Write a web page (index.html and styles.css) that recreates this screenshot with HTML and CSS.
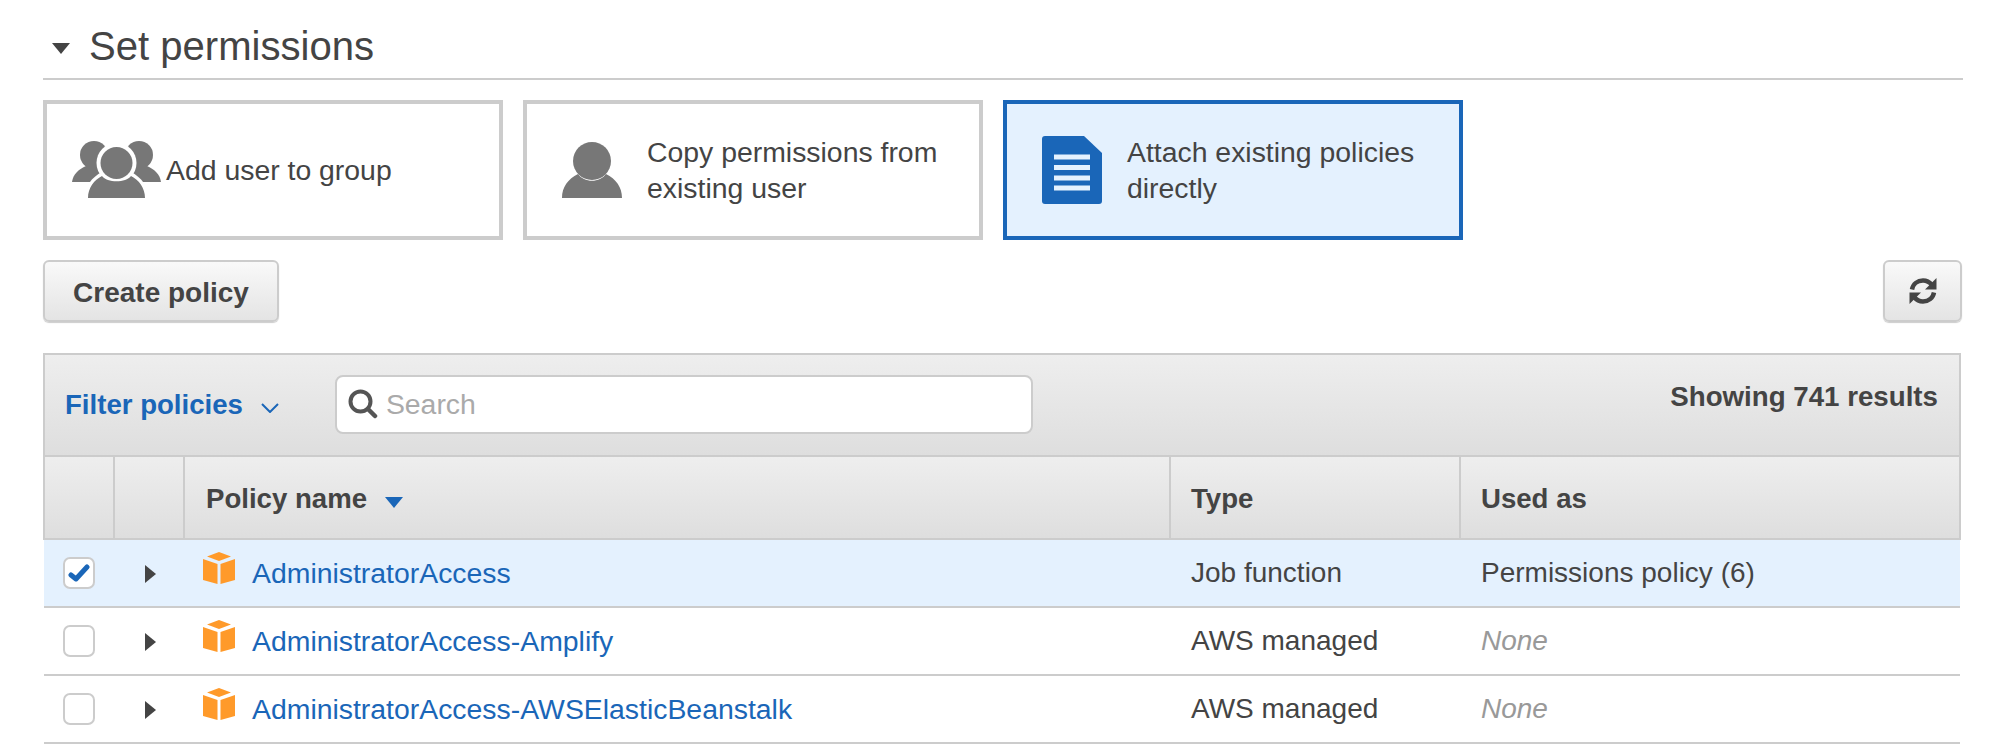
FILE: index.html
```html
<!DOCTYPE html>
<html lang="en">
<head>
  <meta charset="UTF-8" />
  <title>Set permissions</title>
  <link rel="stylesheet" href="styles.css">
</head>
<body>
  <div class="container">
    <h2 class="section-title">
      <svg class="title-caret" width="18" height="11" viewBox="0 0 18 11"><path d="M0 0H18L9 11Z" fill="#444"/></svg>
      Set permissions
    </h2>

    <div class="cards">
      <div class="card card-group">
        <svg class="card-icon" width="90" height="58" viewBox="0 0 90 58">
          <g fill="#777">
            <circle cx="22" cy="14" r="14"/>
            <circle cx="67" cy="14" r="14"/>
            <path d="M0 41C1 33 7 28 14 25H31V41Z"/>
            <path d="M89 41C88 33 82 28 75 25H58V41Z"/>
          </g>
          <circle cx="44.500" cy="22" r="20" fill="#fff"/>
          <path d="M12 58C12 46 20 36 30 31H59C69 36 77 46 77 58Z" fill="#fff"/>
          <circle cx="44.500" cy="22" r="16" fill="#777"/>
          <path d="M16 57C16 47 22 39 30 35C35 42 54 42 59 35C67 39 73 47 73 57Z" fill="#777"/>
        </svg>
        <span>Add user to group</span>
      </div>
      <div class="card card-copy">
        <svg class="card-icon" width="60" height="56" viewBox="0 0 60 56">
          <circle cx="30" cy="19" r="19" fill="#777"/>
          <path d="M0 56C0 45 6 37 16 32C22 41 38 41 44 32C54 37 60 45 60 56Z" fill="#777"/>
        </svg>
        <span>Copy permissions from<br>existing user</span>
      </div>
      <div class="card card-active">
        <svg class="card-icon" width="60" height="68" viewBox="0 0 60 68">
          <path d="M3 0H42L60 17V65A3 3 0 0 1 57 68H3A3 3 0 0 1 0 65V3A3 3 0 0 1 3 0Z" fill="#1a66b8"/>
          <path d="M12 21H48M12 31.500H48M12 42H48M12 52H48" stroke="#e4f1fe" stroke-width="5"/>
        </svg>
        <span>Attach existing policies<br>directly</span>
      </div>
    </div>

    <div class="actions">
      <button class="btn btn-create">Create policy</button>
      <button class="btn btn-refresh">
        <svg width="28" height="26" viewBox="0 0 28 26" fill="none">
          <path d="M3 11.500C4 6 8.500 2.500 14 2.500C18 2.500 20.500 4 23 7" stroke="#444" stroke-width="4.500"/>
          <path d="M27.500 0V11.500H16Z" fill="#444"/>
          <path d="M25 14.500C24 20 19.500 23.500 14 23.500C10 23.500 7.500 22 5 19" stroke="#444" stroke-width="4.500"/>
          <path d="M0.500 26V14.500H12Z" fill="#444"/>
        </svg>
      </button>
    </div>

    <div class="toolbar">
      <a class="filter">Filter policies</a>
      <svg class="filter-chevron" width="18" height="10" viewBox="0 0 18 10" fill="none"><path d="M1 1L9 9L17 1" stroke="#1a66b8" stroke-width="2"/></svg>
      <div class="search">
        <svg width="30" height="30" viewBox="0 0 30 30" fill="none">
          <circle cx="12.500" cy="12.500" r="10" stroke="#555" stroke-width="4"/>
          <path d="M20 20L27 27" stroke="#555" stroke-width="4.500" stroke-linecap="round"/>
        </svg>
        <span class="placeholder">Search</span>
      </div>
      <div class="results">Showing 741 results</div>
    </div>

    <table class="policies">
      <thead>
        <tr>
          <th class="col-check"></th>
          <th class="col-expand"></th>
          <th class="col-name">Policy name
            <svg class="sort-caret" width="18" height="11" viewBox="0 0 18 11"><path d="M0 0H18L9 11Z" fill="#1a66b8"/></svg>
          </th>
          <th class="col-type">Type</th>
          <th class="col-used">Used as</th>
        </tr>
      </thead>
      <tbody>
        <tr class="selected">
          <td class="check-cell"><span class="checkbox">
            <svg width="22" height="18" viewBox="0 0 22 18" fill="none"><path d="M3 11L8 15L19 3" stroke="#1a66b8" stroke-width="5" stroke-linecap="round" stroke-linejoin="round"/></svg>
          </span></td>
          <td><span class="expand"></span></td>
          <td class="name-cell">
            <div class="name-wrap">
              <svg class="cube" width="32" height="32" viewBox="0 0 32 32"><path d="M16 0L28 4.500L16 9L4 4.500Z" fill="#ff9a2a"/><path d="M0 7L14.500 12V32L0 28Z" fill="#ff9a2a"/><path d="M32 7L17.500 12V32L32 28Z" fill="#ff9a2a"/></svg>
              <a>AdministratorAccess</a>
            </div>
          </td>
          <td>Job function</td>
          <td>Permissions policy (6)</td>
        </tr>
        <tr>
          <td class="check-cell"><span class="checkbox"></span></td>
          <td><span class="expand"></span></td>
          <td class="name-cell">
            <div class="name-wrap">
              <svg class="cube" width="32" height="32" viewBox="0 0 32 32"><path d="M16 0L28 4.500L16 9L4 4.500Z" fill="#ff9a2a"/><path d="M0 7L14.500 12V32L0 28Z" fill="#ff9a2a"/><path d="M32 7L17.500 12V32L32 28Z" fill="#ff9a2a"/></svg>
              <a>AdministratorAccess-Amplify</a>
            </div>
          </td>
          <td>AWS managed</td>
          <td class="none">None</td>
        </tr>
        <tr>
          <td class="check-cell"><span class="checkbox"></span></td>
          <td><span class="expand"></span></td>
          <td class="name-cell">
            <div class="name-wrap">
              <svg class="cube" width="32" height="32" viewBox="0 0 32 32"><path d="M16 0L28 4.500L16 9L4 4.500Z" fill="#ff9a2a"/><path d="M0 7L14.500 12V32L0 28Z" fill="#ff9a2a"/><path d="M32 7L17.500 12V32L32 28Z" fill="#ff9a2a"/></svg>
              <a>AdministratorAccess-AWSElasticBeanstalk</a>
            </div>
          </td>
          <td>AWS managed</td>
          <td class="none">None</td>
        </tr>
      </tbody>
    </table>
  </div>
</body>
</html>
```

FILE: styles.css
```css
* { box-sizing: border-box; }
body { margin: 0; background: #fff; color: #444; font-family: "Liberation Sans", Arial, sans-serif; font-size: 28.4px; }
.container { padding: 0 31px 0 43px; }

.section-title { display: flex; align-items: center; gap: 19px; height: 80px; margin: 0 -2px 0 0; padding: 14px 0 0 9px; border-bottom: 2px solid #ccc; font-size: 40.1px; font-weight: normal; }
.title-caret { margin-top: 4px; }

.cards { display: flex; gap: 20px; margin-top: 20px; }
.card { display: flex; align-items: center; width: 460px; height: 140px; border: 4px solid #ccc; line-height: 36px; }
.card-group { padding-left: 25px; gap: 4px; }
.card-copy { padding-left: 35px; gap: 25px; }
.card-active { padding-left: 35px; gap: 25px; background: #e4f1fe; border-color: #1a66b8; }

.actions { display: flex; justify-content: space-between; margin: 20px -1px 0 0; }
.btn { height: 62px; border: 2px solid #ccc; border-radius: 6px; background: linear-gradient(#f9f9f9, #e4e4e4); box-shadow: 0 1px 1px rgba(0,0,0,0.2); color: #444; font-family: inherit; font-size: 28px; font-weight: bold; }
.btn-create { width: 236px; padding-top: 4px; }
.btn-refresh { display: flex; align-items: center; justify-content: center; width: 79px; padding: 0; }

.toolbar { display: flex; align-items: center; height: 102px; margin-top: 31px; padding: 0 21px 0 20px; border: 2px solid #ccc; border-bottom: 0; background: linear-gradient(#eee, #dedede); }
.filter { color: #1a66b8; font-size: 27.6px; font-weight: bold; }
.filter-chevron { margin: 6px 0 0 18px; }
.search { display: flex; align-items: center; gap: 8px; width: 698px; height: 59px; margin: 0 0 2px 56px; padding-left: 11px; border: 2px solid #ccc; border-radius: 8px; background: #fff; }
.placeholder { color: #aaa; }
.results { margin: -16px 0 0 auto; font-size: 27.7px; font-weight: bold; }

.policies { width: 100%; border-collapse: collapse; table-layout: fixed; }
.policies th { height: 83px; padding: 2px 21px 0; border: 2px solid #ccc; background: linear-gradient(#eee, #dedede); text-align: left; font-size: 27.6px; font-weight: bold; }
.policies td { height: 68px; padding: 0 21px; border-bottom: 2px solid #ccc; font-size: 28px; }
.col-check { width: 70px; }
.col-expand { width: 70px; }
.col-name { width: 986px; }
.col-type { width: 290px; }
.policies .col-type, .policies .col-used { padding-left: 20px; }
.sort-caret { margin-left: 10px; }

.selected td { background: #e4f1fe; }
.policies a { color: #1a66b8; font-size: 28.4px; }
.none { color: #999; font-style: italic; }

.policies .check-cell, .policies .name-cell { padding-left: 19px; }
.checkbox { display: flex; align-items: center; justify-content: center; width: 32px; height: 32px; border: 2px solid #ccc; border-radius: 7px; background: #fff; }
.expand { display: block; width: 0; height: 0; margin: 2px 0 0 10px; border-style: solid; border-width: 9px 0 9px 11px; border-color: transparent transparent transparent #444; }
.name-wrap { display: flex; align-items: center; gap: 17px; white-space: nowrap; }
.cube { margin-top: -10px; }
```
